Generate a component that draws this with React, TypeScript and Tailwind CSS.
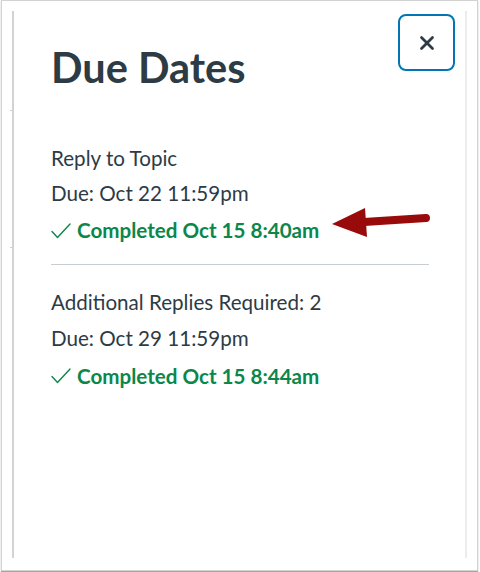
import { X } from 'lucide-react';

const Check = () => (
    <svg className="w-[20px] h-[18px] shrink-0" viewBox="0 0 20 18" fill="none">
        <path d="M1 9.5 L6.5 15.5 L19 2" stroke="#0B874B" strokeWidth="1.4" strokeLinecap="round" strokeLinejoin="round" />
    </svg>
);

const Completed = ({ when }: { when: string }) => (
    <div className="mt-[2px] flex items-center gap-[6px] leading-[35.5px]">
        <Check />
        <span className="font-bold text-[#0B874B]">Completed {when}</span>
    </div>
);

const App = () => {
    return (
        <div className="w-[480px] h-[572px] bg-white" style={{ fontFamily: 'Lato, "Open Sans", sans-serif' }}>
            <div className="relative ml-[1px] w-[477px] h-[571px] border border-[#d2d2d2] shadow-[0_1px_1px_rgba(0,0,0,0.35)] pt-[10px] pl-[10px]">
                {/* little ticks on the left rail */}
                <span className="absolute left-[8px] top-[109px] w-[3px] h-[1px] bg-[#cfcfcf]" />
                <span className="absolute left-[8px] top-[246px] w-[3px] h-[1px] bg-[#cfcfcf]" />

                <div className="relative w-[455px] h-[547px] border-l-2 border-[#d3d3d3] border-r-2 border-r-[#ececec] pl-[37px] pr-[36px] text-[20.6px] text-[#2D3B45]">
                    <button className="absolute top-[3px] right-[10px] w-[57px] h-[57px] rounded-[8px] border-2 border-[#0374B5] flex items-center justify-center text-[#2D3B45]">
                        <X size={22} strokeWidth={3} />
                    </button>

                    <h1 className="pt-[32px] text-[41.5px] font-bold leading-[48px] text-[#2D3B45]">Due Dates</h1>

                    <div className="mt-[50px]">
                        <div className="leading-[35px]">Reply to Topic</div>
                        <div className="leading-[35px]">Due: Oct 22 11:59pm</div>
                        <Completed when="Oct 15 8:40am" />
                    </div>

                    <div className="mt-[15px] h-[1px] bg-[#c7cdd1]" />

                    <div className="mt-[19px]">
                        <div className="leading-[36.5px]">Additional Replies Required: 2</div>
                        <div className="leading-[36.5px]">Due: Oct 29 11:59pm</div>
                        <Completed when="Oct 15 8:44am" />
                    </div>
                </div>

                {/* annotation arrow */}
                <svg className="absolute left-[320px] top-[200px] w-[120px] h-[45px]" viewBox="0 0 120 45">
                    <line x1="42" y1="21" x2="104" y2="17" stroke="#990a0a" strokeWidth="8" strokeLinecap="round" />
                    <polygon points="10,23 43,7 45,36" fill="#990a0a" />
                </svg>
            </div>
        </div>
    );
};

export default App;
